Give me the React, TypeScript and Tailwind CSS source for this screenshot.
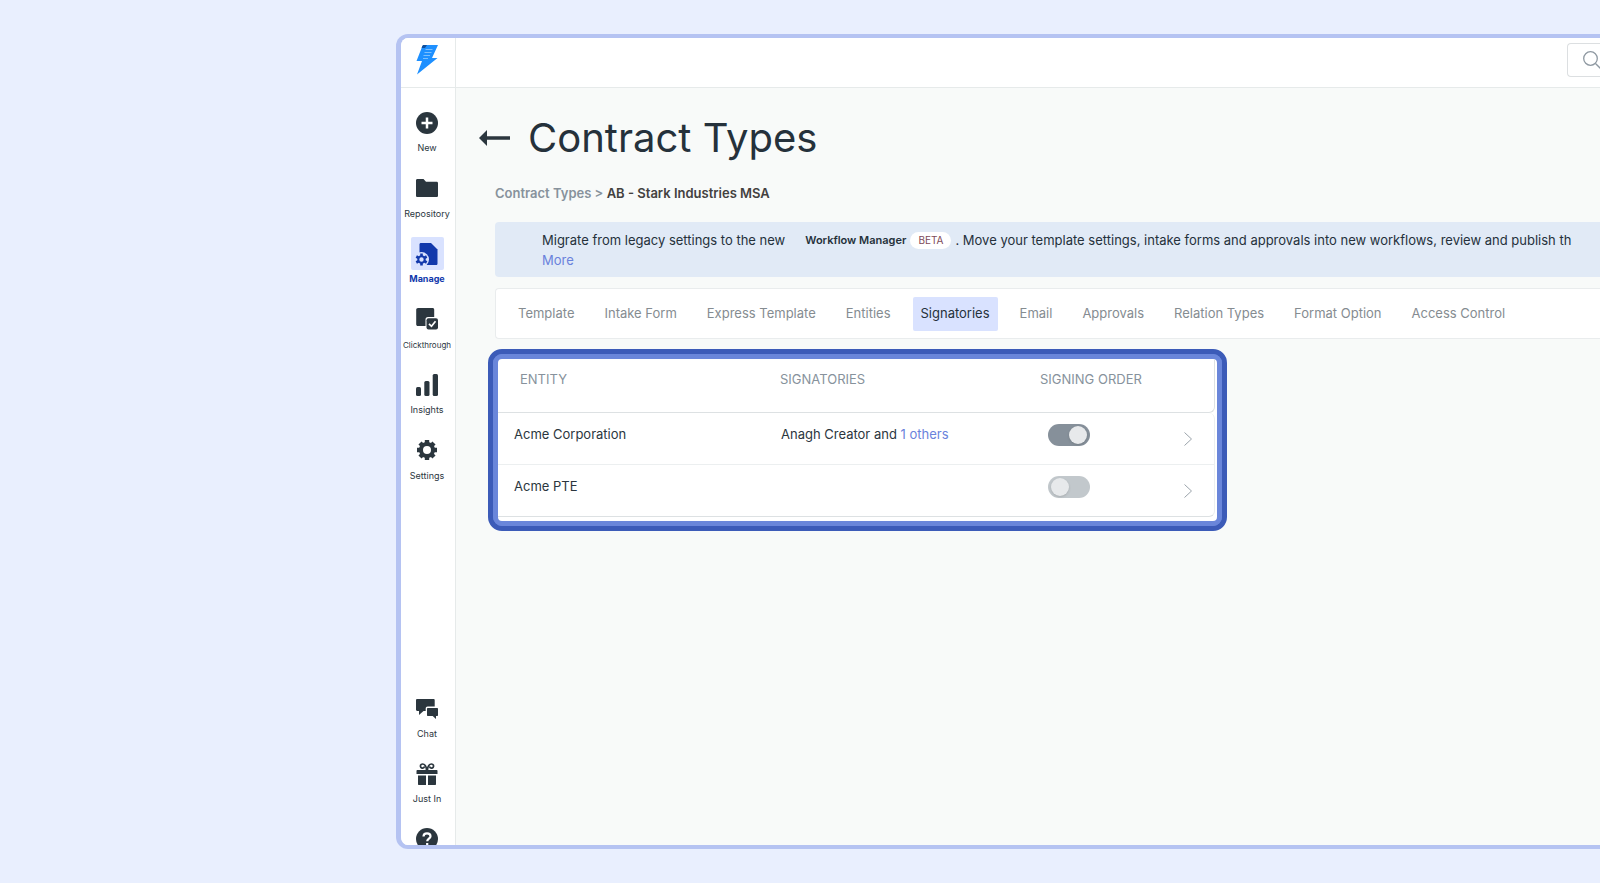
import clsx from "clsx";
import { useState, type ReactNode } from "react";

const tabs = [
  "Template",
  "Intake Form",
  "Express Template",
  "Entities",
  "Signatories",
  "Email",
  "Approvals",
  "Relation Types",
  "Format Option",
  "Access Control",
];

interface Entity {
  name: string;
  signatory?: string;
  others?: number;
  ordered: boolean;
}

const entities: Entity[] = [
  {
    name: "Acme Corporation",
    signatory: "Anagh Creator",
    others: 1,
    ordered: true,
  },
  { name: "Acme PTE", ordered: false },
];

//#region Icons

function Logo() {
  return (
    <svg viewBox="0 0 22 31" className="h-[31px] w-[22px]" aria-hidden="true">
      <path d="M8 1H22L16 14h5.500L1 30.500 6 17H.5L6 3Z" fill="#1e90ff" />
      <path d="M6 3c0-1.500 1-2 2-2h3L9 4H5.600Z" fill="#0d4f9e" />
      <path
        d="M9.500 5.500h7M8.500 8.500h7M7.500 11.500h6.500M7 14.500h5"
        stroke="#7cc0ff"
        strokeWidth="1"
      />
    </svg>
  );
}

function PlusIcon() {
  return (
    <svg viewBox="0 0 22 22" className="h-[22px] w-[22px]" aria-hidden="true">
      <circle cx="11" cy="11" r="11" fill="currentColor" />
      <path d="M11 5.500v11M5.500 11h11" stroke="#fff" strokeWidth="2.500" />
    </svg>
  );
}

function FolderIcon() {
  return (
    <svg viewBox="0 0 22 22" className="h-[22px] w-[22px]" aria-hidden="true">
      <path
        d="M1.500 2h6L10 4.800h10.500c1 0 1.500.6 1.500 1.400v12.300c0 1-.6 1.500-1.500 1.500h-19C.6 20 0 19.500 0 18.500v-15C0 2.500.6 2 1.500 2Z"
        fill="currentColor"
      />
    </svg>
  );
}

function ManageIcon() {
  return (
    <svg viewBox="0 0 24 24" className="h-6 w-6" aria-hidden="true">
      <path
        d="M6 1h10l6.500 6.500V21.500c0 1-.6 1.500-1.500 1.500H6c-1 0-1.500-.5-1.500-1.500v-19C4.500 1.500 5 1 6 1Z"
        fill="currentColor"
      />
      <circle cx="6.500" cy="17.500" r="7.500" fill="#d9e2ff" />
      <path
        d="M6.500 11.500v12M1.300 14.500l10.400 6M1.300 20.500l10.400-6"
        stroke="currentColor"
        strokeWidth="2.600"
      />
      <circle
        cx="6.500"
        cy="17.500"
        r="3.200"
        fill="#d9e2ff"
        stroke="currentColor"
        strokeWidth="2"
      />
    </svg>
  );
}

function ClickthroughIcon() {
  return (
    <svg viewBox="0 0 22 22" className="h-[22px] w-[22px]" aria-hidden="true">
      <path
        d="M2 0h14.500c1 0 1.700.7 1.700 1.700V9H12c-1.600 0-2.500 1-2.500 2.500V18H2c-1.200 0-1.800-.7-1.800-1.800V1.800C.2.7 1 0 2 0Z"
        fill="currentColor"
      />
      <rect x="10.500" y="10.300" width="11.500" height="11.200" rx="2" fill="currentColor" />
      <path
        d="m13 15.800 2.500 2.500 4-5"
        fill="none"
        stroke="#fff"
        strokeWidth="1.700"
      />
    </svg>
  );
}

function InsightsIcon() {
  return (
    <svg viewBox="0 0 22 22" className="h-[22px] w-[22px]" aria-hidden="true">
      <g fill="currentColor">
        <rect x="0" y="13" width="5" height="9" rx="1.500" />
        <rect x="8.300" y="7" width="5.200" height="15" rx="1.500" />
        <rect x="16.700" y="0" width="5.300" height="22" rx="1.500" />
      </g>
    </svg>
  );
}

function GearIcon() {
  return (
    <svg viewBox="0 0 22 22" className="h-[22px] w-[22px]" aria-hidden="true">
      <circle
        cx="11"
        cy="11"
        r="6"
        fill="none"
        stroke="currentColor"
        strokeWidth="4"
      />
      <g stroke="currentColor" strokeWidth="4.400" strokeLinecap="butt">
        <path d="M11 1v3M11 18v3M1 11h3M18 11h3" />
        <path d="m4 4 2 2M16 16l2 2M4 18l2-2M16 6l2-2" />
      </g>
    </svg>
  );
}

function ChatIcon() {
  return (
    <svg viewBox="0 0 22 22" className="h-[22px] w-[22px]" aria-hidden="true">
      <path
        d="M1.300 1h16.200c.8 0 1.200.5 1.200 1.200v6.300h-7c-1.300 0-2 .8-2 2V13H7.500L3 17v-4H1.300C.5 13 0 12.500 0 11.800V2.200C0 1.500.5 1 1.300 1Z"
        fill="currentColor"
      />
      <path
        d="M12 10h9c.7 0 1 .4 1 1v6c0 .7-.3 1-1 1h-1v3l-3.300-3H12c-.7 0-1-.3-1-1v-6c0-.6.3-1 1-1Z"
        fill="currentColor"
      />
    </svg>
  );
}

function GiftIcon() {
  return (
    <svg viewBox="0 0 22 22" className="h-[22px] w-[22px]" aria-hidden="true">
      <g fill="currentColor">
        <path d="M1.500 7H20.500c.6 0 1 .3 1 1v3H.5V8c0-.7.400-1 1-1ZM2 12.500h8V22H3c-.7 0-1-.3-1-1ZM12 12.500h8V21c0 .7-.3 1-1 1h-7Z" />
      </g>
      <g fill="none" stroke="currentColor" strokeWidth="1.700">
        <path d="M10.500 7C10.500 3 8.500 1 6.500 1S4 3 4.800 4.300 8 5.500 8.500 3.500" />
        <path d="M11.500 7C11.500 3 13.500 1 15.500 1s2.500 2 1.700 3.300S14 5.500 13.500 3.500" />
      </g>
    </svg>
  );
}

function HelpIcon() {
  return (
    <svg viewBox="0 0 22 22" className="h-[22px] w-[22px]" aria-hidden="true">
      <circle cx="11" cy="11" r="11" fill="currentColor" />
      <path
        d="M7.500 8.500C7.500 6.500 9 5.300 11 5.300s3.500 1.200 3.500 3c0 2.400-3.300 2.500-3.300 5M11.200 15v2.200"
        fill="none"
        stroke="#fff"
        strokeWidth="2.200"
      />
    </svg>
  );
}

//#endregion

interface NavItemProps {
  label?: string;
  icon: ReactNode;
  active?: boolean;
  small?: boolean;
}

function NavItem({ label, icon, active, small }: NavItemProps) {
  return (
    <a href="#" className="flex flex-col items-center whitespace-nowrap">
      <span
        className={clsx(
          "flex h-[33px] w-[33px] items-center justify-center rounded-xs",
          active ? "bg-[#d9e2ff] text-[#1239ac]" : "text-[#2b363e]"
        )}
      >
        {icon}
      </span>
      {label && (
        <span
          className={clsx(
            "leading-[18px]",
            small ? "text-[8px]" : "text-[9px]",
            active ? "font-bold text-[#1239ac]" : "text-[#2b363e]"
          )}
        >
          {label}
        </span>
      )}
    </a>
  );
}

function Sidebar() {
  return (
    <nav className="flex w-[55px] shrink-0 flex-col border-r border-[#e6eaea] bg-white">
      <div className="flex h-[50px] shrink-0 justify-center border-b border-[#e6eaea] pt-1.5 pr-0.5">
        <Logo />
      </div>
      <div className="mt-[18px] grid h-[393px] shrink-0 grid-rows-6 pr-0.5">
        <NavItem label="New" icon={<PlusIcon />} />
        <NavItem label="Repository" icon={<FolderIcon />} />
        <NavItem label="Manage" icon={<ManageIcon />} active />
        <NavItem label="Clickthrough" icon={<ClickthroughIcon />} small />
        <NavItem label="Insights" icon={<InsightsIcon />} />
        <NavItem label="Settings" icon={<GearIcon />} />
      </div>
      <div className="mt-auto -mb-3 grid h-[165px] shrink-0 auto-rows-[65px] pr-0.5">
        <NavItem label="Chat" icon={<ChatIcon />} />
        <NavItem label="Just In" icon={<GiftIcon />} />
        <NavItem icon={<HelpIcon />} />
      </div>
    </nav>
  );
}

function Banner() {
  return (
    <div className="mt-[19px] h-[55px] overflow-hidden rounded-l bg-[#e1eaf6] pt-2 pl-[47px] text-[13px] leading-5 whitespace-nowrap text-[#25313b]">
      <div className="flex items-center">
        <span>Migrate from legacy settings to the new</span>
        <b className="ml-5 text-[11px] font-semibold">Workflow Manager</b>
        <span className="mx-1 rounded-full bg-white px-2 text-[10px] leading-[17px] text-[#7d4a58]">
          BETA
        </span>
        <span>
          . Move your template settings, intake forms and approvals into new
          workflows, review and publish th
        </span>
      </div>
      <a href="#" className="text-[#6a82dc]">
        More
      </a>
    </div>
  );
}

function SignatoriesTable() {
  const [rows, setRows] = useState(entities);

  const toggle = (index: number) =>
    setRows(
      rows.map((row, i) =>
        i === index ? { ...row, ordered: !row.ordered } : row
      )
    );

  return (
    <div className="mt-2.5 -ml-[7px] w-[739px] rounded-[14px] border-5 border-[#3c5bb8] bg-[#6a86da]">
      <div className="rounded-[9px] border-5 border-[#6a86da] bg-white pr-0.5 pb-1">
        <table className="w-full table-fixed border-separate border-spacing-0 text-left text-[13px] text-[#2b363e]">
          <colgroup>
            <col className="w-[260px]" />
            <col className="w-[260px]" />
            <col className="w-[130px]" />
            <col />
          </colgroup>
          <thead>
            <tr className="h-[54px] align-top text-[#87929c] *:border-b *:border-[#dde1e3]">
              <th className="pt-[11px] pl-[22px] font-normal">ENTITY</th>
              <th className="pt-[11px] pl-[22px] font-normal">SIGNATORIES</th>
              <th className="pt-[11px] pl-[22px] font-normal whitespace-nowrap">
                SIGNING ORDER
              </th>
              <td className="rounded-br-md border-r" />
            </tr>
          </thead>
          <tbody>
            {rows.map((row, i) => (
              <tr
                key={row.name}
                className="group h-[52px] align-top *:border-b *:border-[#eceff0] last:*:border-b-[#dde1e3]"
              >
                <td className="pt-3 pl-4">{row.name}</td>
                <td className="pt-3 pl-[23px]">
                  {row.signatory && (
                    <>
                      {row.signatory} and{" "}
                      <a href="#" className="text-[#6a82dc]">
                        {row.others} others
                      </a>
                    </>
                  )}
                </td>
                <td className="pt-[11px] pl-[30px]">
                  <input
                    type="checkbox"
                    role="switch"
                    aria-label={`Signing order for ${row.name}`}
                    checked={row.ordered}
                    onChange={() => toggle(i)}
                    className="flex h-[22px] w-[42px] appearance-none items-center rounded-full bg-[#c2c8cc] px-[3px] before:h-[18px] before:w-[18px] before:rounded-full before:bg-[#e7e9eb] before:shadow checked:justify-end checked:bg-[#86909a]"
                  />
                </td>
                <td className="border-r pt-[19px] pr-[22px] group-first:rounded-tr-md group-last:rounded-br-md">
                  <button
                    aria-label={`Open ${row.name}`}
                    className="ml-auto block"
                  >
                    <svg viewBox="0 0 8 14" className="h-3.5 w-2">
                      <path
                        d="m.5.5 7 6.500-7 6.500"
                        fill="none"
                        stroke="#9aa3aa"
                      />
                    </svg>
                  </button>
                </td>
              </tr>
            ))}
          </tbody>
        </table>
      </div>
    </div>
  );
}

export default function App() {
  const [activeTab, setActiveTab] = useState("Signatories");

  return (
    <div className="h-screen min-h-[700px] overflow-hidden bg-[#e9effe] py-[34px] pl-[396px] font-['Inter','Noto_Sans',sans-serif]">
      <div className="flex h-full overflow-hidden rounded-l-xl border-y-4 border-l-5 border-[#b5c3f2] bg-[#f8faf9]">
        <Sidebar />
        <div className="min-w-0 flex-1">
          <header className="flex h-[50px] justify-end border-b border-[#e6eaea] bg-white pt-[5px]">
            <button
              aria-label="Search"
              className="h-[34px] w-[33px] rounded-l border border-r-0 border-[#dcdfe1] pl-[15px]"
            >
              <svg viewBox="0 0 17 18" className="h-[18px] w-[17px]">
                <circle
                  cx="7.500"
                  cy="7.500"
                  r="6.800"
                  fill="none"
                  stroke="#8e98a1"
                  strokeWidth="1.300"
                />
                <path d="m12.500 12.500 5 5" stroke="#8e98a1" strokeWidth="1.300" />
              </svg>
            </button>
          </header>

          <main className="pl-[39px]">
            <div className="-ml-4 flex items-center gap-[18px] pt-[26px]">
              <button aria-label="Back">
                <svg viewBox="0 0 31 16" className="h-4 w-[31px]">
                  <path d="M0 8 8 0v6.300h23v3.400H8V16Z" fill="#2b363e" />
                </svg>
              </button>
              <h1 className="text-[40px] leading-[48px] text-[#25313b]">
                Contract Types
              </h1>
            </div>

            <div className="mt-[21px] text-[13px] leading-5 font-semibold text-[#43413f]">
              <a href="#" className="text-[#87929c]">
                Contract Types &gt;
              </a>{" "}
              AB - Stark Industries MSA
            </div>

            <Banner />

            <div className="mt-[11px] flex h-[51px] items-center gap-3.5 overflow-hidden rounded-l border border-r-0 border-[#e9eced] bg-white pl-3.5">
              {tabs.map((tab) => (
                <button
                  key={tab}
                  onClick={() => setActiveTab(tab)}
                  className={clsx(
                    "h-[34px] rounded-xs px-2 text-[13px] whitespace-nowrap",
                    tab === activeTab
                      ? "bg-[#d9e2ff] text-[#25313b]"
                      : "text-[#858c91]"
                  )}
                >
                  {tab}
                </button>
              ))}
            </div>

            <SignatoriesTable />
          </main>
        </div>
      </div>
    </div>
  );
}
